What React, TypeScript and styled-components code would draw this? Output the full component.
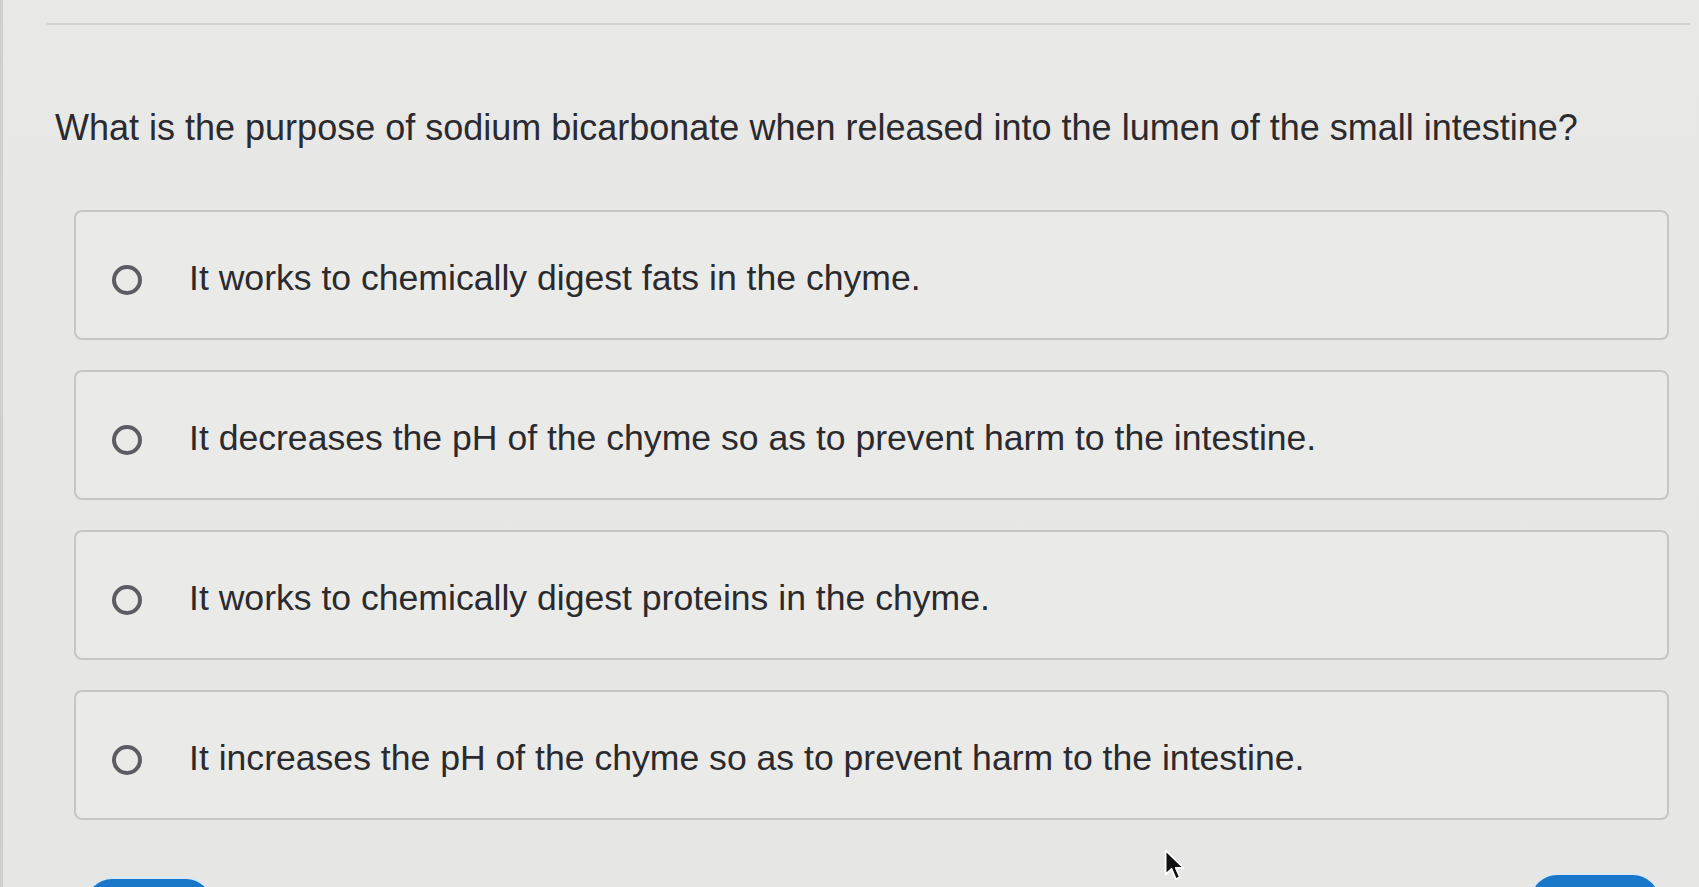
import React from "react";
import styled, { createGlobalStyle } from "styled-components";

const Global = createGlobalStyle`
  html, body {
    margin: 0;
    padding: 0;
    height: 100%;
    overflow: hidden;
    background: #e7e7e5;
  }
  body {
    font-family: "Liberation Sans", Arial, sans-serif;
    color: #2b2b30;
  }
`;

const Page = styled.div`
  position: relative;
  height: 887px;
  box-sizing: border-box;
  border-left: 3px solid #cfcfcd;
  padding-top: 23px;
  background: linear-gradient(180deg, #e8e8e6 0%, #e6e6e4 100%);
`;

const Divider = styled.hr`
  margin: 0 9px 0 44px;
  border: none;
  height: 2px;
  background: #d1d1cf;
`;

const Question = styled.h1`
  margin: 82px 0 0 52px;
  font-size: 36px;
  font-weight: 400;
  line-height: 41px;
  letter-spacing: 0;
  color: #2a2a2f;
`;

const Column = styled.div`
  margin: 62px 0 0 71px;
  width: 1595px;
`;

const Options = styled.div`
  display: flex;
  flex-direction: column;
  gap: 30px;
`;

const Option = styled.label`
  box-sizing: border-box;
  height: 130px;
  display: flex;
  align-items: center;
  padding: 10px 0 0 36px;
  border: 2px solid #c6c6c5;
  border-radius: 8px;
  background: #eaeae8;
  cursor: pointer;
`;

const Radio = styled.span`
  box-sizing: border-box;
  flex: none;
  width: 30px;
  height: 30px;
  border-radius: 50%;
  border: 4px solid #5c5c63;
  margin-right: 47px;
`;

const OptionText = styled.span`
  font-size: 35.6px;
  line-height: 41px;
  color: #2a2a2f;
  margin-top: -3px;
`;

const ButtonRow = styled.div`
  margin: 56px 10px 0 12px;
  display: flex;
  justify-content: space-between;
  align-items: flex-start;
`;

const Button = styled.button<{ $w: number; $offset: number }>`
  width: ${(p) => p.$w}px;
  height: 52px;
  margin-top: ${(p) => p.$offset}px;
  border: none;
  border-radius: 26px;
  background: #1977c9;
  box-shadow: 0 -1px 0 1px #d8e8f6;
  font-family: inherit;
  font-size: 18px;
  color: #fff;
`;

const Cursor = styled.svg`
  position: absolute;
  left: 1159px;
  top: 848px;
  width: 24px;
  height: 36px;
`;

const options = [
  "It works to chemically digest fats in the chyme.",
  "It decreases the pH of the chyme so as to prevent harm to the intestine.",
  "It works to chemically digest proteins in the chyme.",
  "It increases the pH of the chyme so as to prevent harm to the intestine.",
];

export default function App() {
  return (
    <>
      <Global />
      <Page>
        <Divider />
        <Question>
          What is the purpose of sodium bicarbonate when released into the lumen of the small intestine?
        </Question>
        <Column>
          <Options>
            {options.map((o) => (
              <Option key={o}>
                <Radio />
                <OptionText>{o}</OptionText>
              </Option>
            ))}
          </Options>
          <ButtonRow>
            <Button $w={126} $offset={3} aria-label="Previous" />
            <Button $w={128} $offset={-1} aria-label="Next" />
          </ButtonRow>
        </Column>
        <Cursor viewBox="0 0 20 30">
          <path
            d="M3 2 L3 22 L8 17.5 L11.5 26 L15 24.5 L11.5 16.5 L18 16.5 Z"
            fill="#111"
            stroke="#fff"
            strokeWidth="1.5"
            strokeLinejoin="round"
          />
        </Cursor>
      </Page>
    </>
  );
}
